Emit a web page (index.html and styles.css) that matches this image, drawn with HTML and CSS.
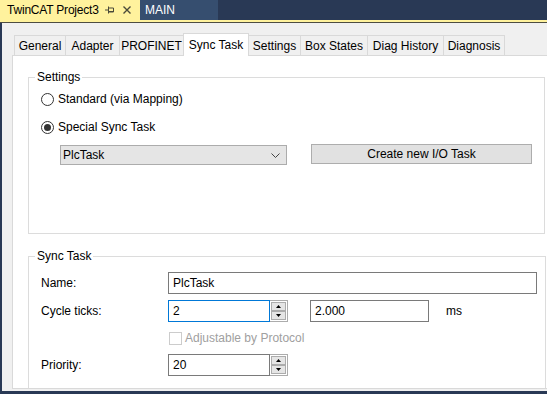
FILE: index.html
```html
<!DOCTYPE html>
<html>
<head>
<meta charset="utf-8">
<link rel="stylesheet" href="styles.css">
</head>
<body>
<div class="doc-tabs">
  <div class="doc-tab active">
    <span class="doc-title">TwinCAT Project3</span>
    <svg class="pin" width="9" height="8" viewBox="0 0 9 8"><path d="M0 4H3M3.5 0.5V7.5M3.5 2H8.5V6H3.5M3.5 5.5H8.5" fill="none" stroke="#4a4a3a" stroke-width="1"/></svg>
    <svg class="close" width="8" height="8" viewBox="0 0 8 8"><path d="M0.5 0.5L7.5 7.5M7.5 0.5L0.5 7.5" fill="none" stroke="#4a4a3a" stroke-width="1.4"/></svg>
  </div>
  <div class="doc-tab">MAIN</div>
</div>
<div class="doc-rule"></div>
<div class="frame">
  <div class="tabs">
    <div class="tab t-general">General</div>
    <div class="tab t-adapter">Adapter</div>
    <div class="tab t-profinet">PROFINET</div>
    <div class="tab t-sync selected">Sync Task</div>
    <div class="tab t-settings">Settings</div>
    <div class="tab t-box">Box States</div>
    <div class="tab t-diag">Diag History</div>
    <div class="tab t-diagnosis">Diagnosis</div>
  </div>
  <div class="panel">
    <fieldset class="group settings">
      <legend>Settings</legend>
      <div class="radio first-radio"><span class="radio-box"></span><span>Standard (via Mapping)</span></div>
      <div class="radio second-radio"><span class="radio-box checked"></span><span>Special Sync Task</span></div>
      <div class="task-row">
        <div class="combo"><span>PlcTask</span>
          <svg width="9" height="5" viewBox="0 0 9 5"><path d="M0.5 0.5L4.5 4.5L8.5 0.5" fill="none" stroke="#444" stroke-width="1"/></svg>
        </div>
        <div class="button">Create new I/O Task</div>
      </div>
    </fieldset>
    <fieldset class="group sync">
      <legend>Sync Task</legend>
      <div class="form">
        <div class="label">Name:</div>
        <div class="field"><div class="textbox wide">PlcTask</div></div>

        <div class="label">Cycle ticks:</div>
        <div class="field">
          <div class="spin">
            <div class="textbox spin-input focused">2</div>
            <div class="spin-buttons">
              <div class="spin-btn"><svg width="5" height="3" viewBox="0 0 5 3"><path d="M0 3L2.5 0L5 3Z" fill="#000"/></svg></div>
              <div class="spin-btn"><svg width="5" height="3" viewBox="0 0 5 3"><path d="M0 0L2.5 3L5 0Z" fill="#000"/></svg></div>
            </div>
          </div>
          <div class="textbox ms-box">2.000</div>
          <div class="unit">ms</div>
        </div>

        <div class="label"></div>
        <div class="field check-row"><span class="check-box"></span><span class="disabled">Adjustable by Protocol</span></div>

        <div class="label">Priority:</div>
        <div class="field">
          <div class="spin">
            <div class="textbox spin-input">20</div>
            <div class="spin-buttons">
              <div class="spin-btn"><svg width="5" height="3" viewBox="0 0 5 3"><path d="M0 3L2.5 0L5 3Z" fill="#000"/></svg></div>
              <div class="spin-btn"><svg width="5" height="3" viewBox="0 0 5 3"><path d="M0 0L2.5 3L5 0Z" fill="#000"/></svg></div>
            </div>
          </div>
        </div>
      </div>
    </fieldset>
  </div>
</div>
</body>
</html>
```
FILE: styles.css
```css
* { box-sizing: border-box; }
html, body {
  margin: 0;
  padding: 0;
  width: 547px;
  height: 394px;
  overflow: hidden;
  background: #293955;
  font-family: "Liberation Sans", Arial, sans-serif;
  font-size: 12px;
  color: #000;
}
.doc-tabs {
  display: flex;
  height: 20px;
  background: #293955;
}
.doc-tab {
  display: flex;
  align-items: center;
  height: 20px;
  width: 78px;
  padding-left: 5px;
  background: #364e6f;
  color: #fff;
  font-size: 12px;
}
.doc-tab.active {
  width: 140px;
  padding-left: 7px;
  background: #fff29d;
  color: #000;
}
.doc-title { flex: none; letter-spacing: -0.2px; }
.pin { margin-left: 6px; flex: none; }
.close { margin-left: 9px; flex: none; }
.doc-rule {
  height: 3px;
  background: #fff29d;
  border-bottom: 1px solid #4d4d42;
}
.frame {
  margin-left: 2px;
  height: 368px;
  background: #f0f0f0;
  display: flex;
  flex-direction: column;
}
.tabs {
  display: flex;
  align-items: flex-end;
  height: 32px;
  padding-left: 12px;
  flex: none;
}
.tab {
  height: 20px;
  padding-top: 2px;
  border-left: 1px solid #d9d9d9;
  border-top: 1px solid #d9d9d9;
  background: #f0f0f0;
  line-height: 16px;
  white-space: nowrap;
  text-align: center;
  flex: none;
}
.t-general { width: 51px; }
.t-adapter { width: 54px; }
.t-profinet { width: 64px; }
.t-sync { width: 66px; }
.t-settings { width: 51px; border-left: none; }
.t-box { width: 67px; }
.t-diag { width: 76px; }
.t-diagnosis { width: 62px; border-right: 1px solid #d9d9d9; }
.tab.selected {
  height: 23px;
  margin-bottom: -1px;
  padding-top: 3px;
  border-right: 1px solid #d9d9d9;
  background: #fff;
  position: relative;
  z-index: 1;
}
.panel {
  margin-left: 10px;
  width: 535px;
  height: 334px;
  border: 1px solid #d9d9d9;
  border-right: none;
  background: #fff;
  overflow: hidden;
  flex: none;
}
.group {
  border: 1px solid #dcdcdc;
  margin: 0 0 0 15px;
  padding: 0 0 0 12px;
  width: 517px;
  min-width: 0;
}
.group legend {
  padding: 0 2px;
  margin-left: -6px;
  line-height: 16px;
}
.settings {
  margin-top: 13px;
  padding-bottom: 68px;
}
.radio {
  display: flex;
  align-items: center;
  height: 16px;
}
.first-radio { margin-top: 6px; }
.second-radio { margin-top: 12px; }
.radio-box {
  width: 13px;
  height: 13px;
  border: 1px solid #333;
  border-radius: 50%;
  background: #fff;
  margin-right: 4px;
  display: flex;
  align-items: center;
  justify-content: center;
}
.radio-box.checked::after {
  content: "";
  width: 7px;
  height: 7px;
  border-radius: 50%;
  background: #333;
}
.task-row {
  display: flex;
  align-items: flex-start;
  margin-top: 9px;
  margin-left: 19px;
}
.combo {
  margin-top: 1px;
  width: 227px;
  height: 20px;
  border: 1px solid #acacac;
  background: #e5e5e5;
  display: flex;
  align-items: center;
  justify-content: space-between;
  padding: 0 6px 0 2px;
}
.button {
  margin-left: 24px;
  width: 221px;
  height: 20px;
  border: 1px solid #adadad;
  background: #e1e1e1;
  display: flex;
  align-items: center;
  justify-content: center;
}
.sync {
  margin-top: 14px;
  width: 518px;
  padding-bottom: 40px;
}
.form {
  display: grid;
  grid-template-columns: 127px 1fr;
  row-gap: 6px;
  margin-top: 8px;
}
.label {
  display: flex;
  align-items: center;
}
.field {
  display: flex;
  align-items: center;
}
.textbox {
  height: 22px;
  border: 1px solid #7a7a7a;
  background: #fff;
  padding: 0 4px;
  display: flex;
  align-items: center;
}
.textbox.wide { width: 369px; }
.spin { display: flex; }
.spin-input { width: 102px; }
.spin-input.focused { border-color: #0078d7; }
.spin-buttons {
  display: flex;
  flex-direction: column;
  justify-content: center;
  width: 18px;
  height: 22px;
  border: 1px solid #acacac;
  border-left: none;
  background: #fff;
  padding: 1px;
}
.spin-btn {
  flex: 1;
  border: 1px solid #acacac;
  background: #e5e5e5;
  display: flex;
  align-items: center;
  justify-content: center;
}
.ms-box {
  margin-left: 22px;
  width: 119px;
}
.unit { margin-left: 17px; }
.check-row { margin-top: 2px; margin-bottom: 2px; height: 16px; padding-left: 1px; }
.check-box {
  width: 13px;
  height: 13px;
  border: 1px solid #cccccc;
  background: #fff;
  margin-right: 3px;
}
.disabled { color: #a0a0a0; }
```
